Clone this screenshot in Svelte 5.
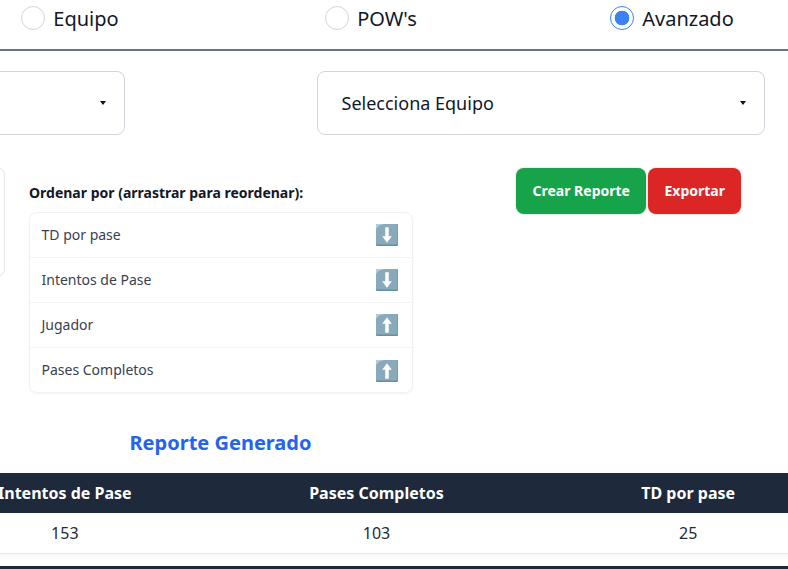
<script lang="ts">
  const radios = [
    { label: 'Equipo', checked: false },
    { label: "POW's", checked: false },
    { label: 'Avanzado', checked: true }
  ];

  const sortFields = [
    { name: 'TD por pase', dir: 'down' },
    { name: 'Intentos de Pase', dir: 'down' },
    { name: 'Jugador', dir: 'up' },
    { name: 'Pases Completos', dir: 'up' }
  ];
</script>

<div class="page">
  <div class="radio-row">
    {#each radios as radio}
      <label class="radio-item">
        <input type="radio" name="mode" checked={radio.checked} />
        <span>{radio.label}</span>
      </label>
    {/each}
  </div>

  <div class="select-row">
    <div class="select"><span class="caret"></span></div>
    <div class="select"><span>Selecciona Equipo</span><span class="caret"></span></div>
  </div>

  <div class="filter-row">
    <div class="stat-box"></div>
    <div class="sort-col">
      <div class="sort-label">Ordenar por (arrastrar para reordenar):</div>
      <ul class="sort-list">
        {#each sortFields as field}
          <li class="sort-item">
            <span class="sort-name">{field.name}</span>
            <svg class="arrow" class:up={field.dir === 'up'} viewBox="0 0 24 24" width="24" height="24">
              <rect x="1" y="1" width="22" height="22" rx="1" fill="#63909f" />
              <rect x="1" y="1" width="21.500" height="20.500" rx="1" fill="#88aabb" />
              <path d="M1 6V2a1 1 0 0 1 1-1H9L4 2.500Z" fill="#b7ced8" />
              <path class="shaft" d="M10.250 4.300h3.500V13.200h3L12 19.700 7.250 13.200h3Z" fill="#fff" />
            </svg>
          </li>
        {/each}
      </ul>
    </div>
    <div class="actions">
      <button class="btn green">Crear Reporte</button>
      <button class="btn red">Exportar</button>
    </div>
  </div>

  <h2 class="report-title">Reporte Generado</h2>

  <table class="report">
    <thead>
      <tr><th>Intentos de Pase</th><th>Pases Completos</th><th>TD por pase</th></tr>
    </thead>
    <tbody>
      <tr><td>153</td><td>103</td><td>25</td></tr>
    </tbody>
  </table>

  <div class="footer-bar"></div>
</div>

<style>
  :global(body) {
    margin: 0;
    background: #fff;
  }

  .page {
    width: 788px;
    height: 569px;
    overflow: hidden;
    font-family: "Noto Sans", sans-serif;
    color: #1f2937;
  }

  .radio-row {
    display: grid;
    grid-template-columns: repeat(3, 301px);
    width: 903px;
    margin-left: -80.5px;
    box-sizing: border-box;
    height: 51px;
    border-bottom: 2px solid #64748b;
  }

  .radio-item {
    display: flex;
    align-items: center;
    justify-content: center;
    gap: 8px;
    height: 38px;
    margin-top: -1px;
    font-size: 20px;
    color: #111827;
  }

  .radio-item input {
    appearance: none;
    width: 24px;
    height: 24px;
    margin: 0;
    border: 1px solid #d1d5db;
    border-radius: 50%;
    background: #fff;
  }

  .radio-item input:checked {
    border-color: #3b82f6;
    background: radial-gradient(circle, #3b82f6 0 7px, #fff 7.6px);
  }

  .select-row {
    display: grid;
    grid-template-columns: 448px 448px;
    gap: 192px;
    margin: 20px 0 0 -323px;
  }

  .select {
    display: flex;
    align-items: center;
    justify-content: space-between;
    height: 64px;
    box-sizing: border-box;
    padding: 0 18px 0 23.5px;
    border: 1px solid #d1d5db;
    border-radius: 8px;
    font-size: 18px;
    color: #111827;
  }

  .select .caret {
    margin-left: auto;
    width: 0;
    height: 0;
    border-left: 3px solid transparent;
    border-right: 3px solid transparent;
    border-top: 4px solid #111;
  }

  .filter-row {
    display: flex;
    align-items: flex-start;
    margin: 32px 0 0 -194.5px;
  }

  .stat-box {
    width: 199.500px;
    height: 110px;
    box-sizing: border-box;
    border: 1px solid #e2e8f0;
    border-radius: 8px;
    flex-shrink: 0;
  }

  .sort-col {
    width: 383.500px;
    margin-left: 24px;
    padding-top: 16px;
    flex-shrink: 0;
  }

  .sort-label {
    font-size: 14px;
    font-weight: 700;
    line-height: 20px;
    color: #111827;
    margin-bottom: 9px;
  }

  .sort-list {
    list-style: none;
    margin: 0;
    padding: 0;
    height: 181px;
    box-sizing: border-box;
    border: 1px solid #f0f1f3;
    border-radius: 8px;
    box-shadow: 0 1px 2px rgba(0, 0, 0, 0.05);
  }

  .sort-item {
    display: flex;
    align-items: center;
    justify-content: space-between;
    height: 45px;
    box-sizing: border-box;
    padding: 0 12.700px 0 11.500px;
    font-size: 14px;
    color: #374151;
    border-bottom: 1px solid #f1f3f5;
  }

  .sort-item:last-child {
    border-bottom: none;
  }

  .sort-name {
    padding-bottom: 2px;
  }

  .arrow.up .shaft {
    transform: rotate(180deg);
    transform-origin: 12px 12px;
  }

  .actions {
    display: flex;
    gap: 2px;
    margin: 1px 0 0 103px;
    flex-shrink: 0;
  }

  .btn {
    height: 46px;
    border: none;
    border-radius: 8px;
    font-family: inherit;
    font-size: 14px;
    font-weight: 700;
    color: #fff;
    padding: 0 16.500px 2px;
    box-shadow: 0 0 2px rgba(0, 0, 0, 0.25);
  }

  .green {
    background: #16a34a;
    padding-left: 17px;
    padding-right: 16px;
  }

  .red {
    background: #dc2626;
  }

  .report-title {
    margin: 36px 0 0 129.5px;
    font-size: 20px;
    line-height: 28px;
    font-weight: 700;
    color: #2563eb;
  }

  .report {
    width: 935px;
    table-layout: fixed;
    border-collapse: collapse;
    margin: 16px 0 0 -91px;
    box-shadow: 0 4px 6px -1px rgba(0, 0, 0, 0.04);
  }

  .report th {
    height: 40px;
    padding: 0;
    background: #1e293b;
    color: #fff;
    font-size: 16px;
    font-weight: 700;
  }

  .report td {
    height: 40px;
    padding: 0;
    text-align: center;
    font-size: 16px;
    color: #1f2937;
    border-bottom: 1px solid #e5e7eb;
  }

  .footer-bar {
    height: 20px;
    margin-top: 12px;
    background: #1f2937;
  }
</style>
